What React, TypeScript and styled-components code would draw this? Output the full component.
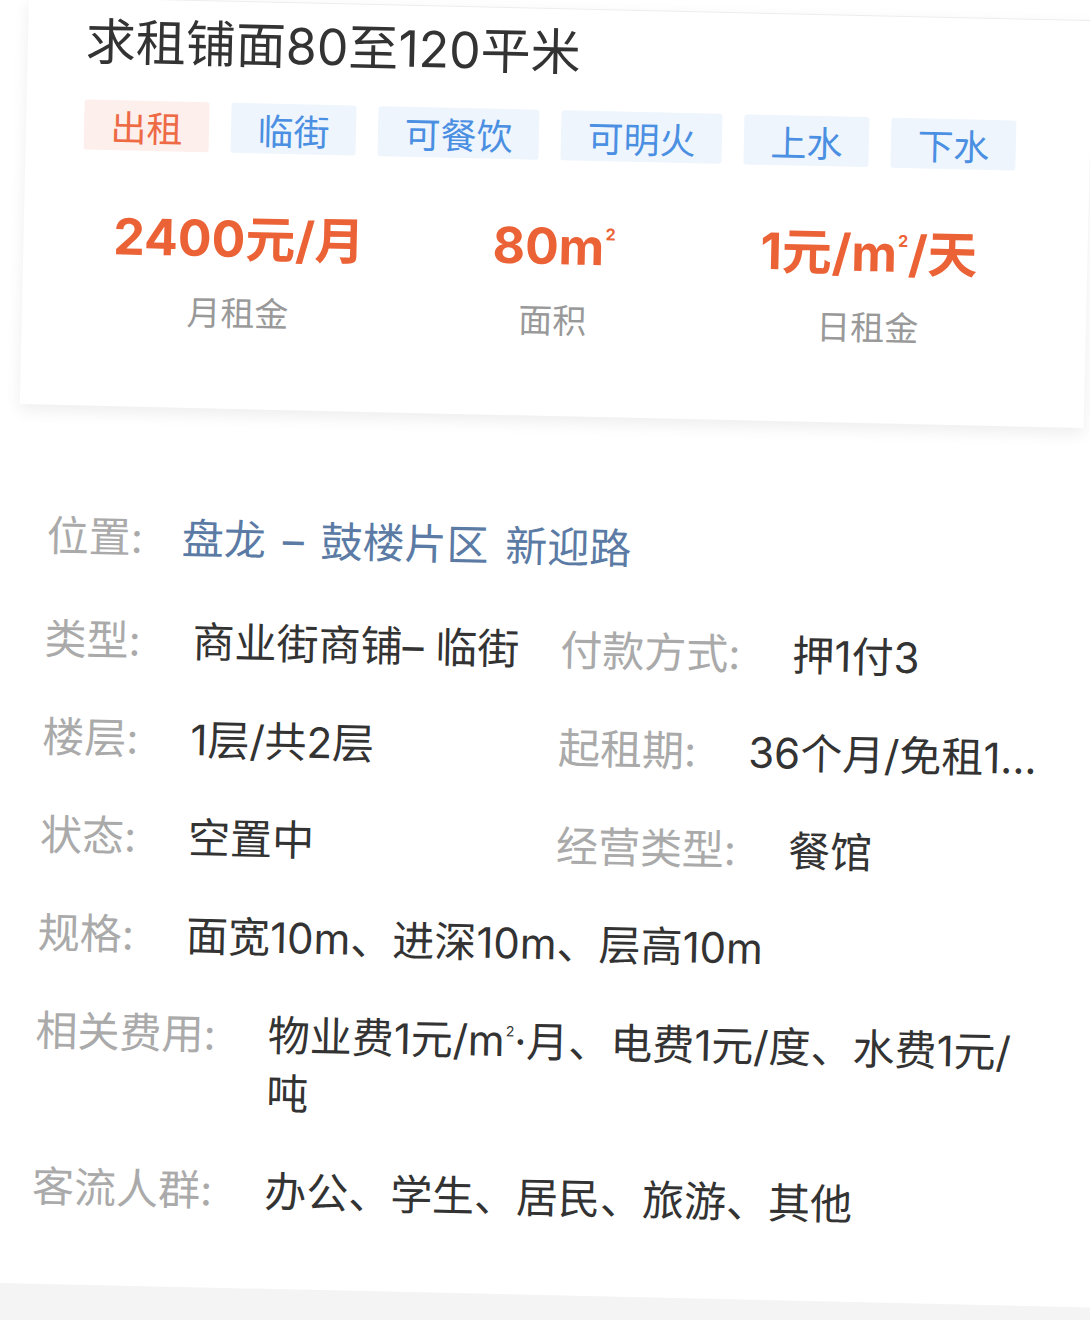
import React from 'react';
import styled, { createGlobalStyle } from 'styled-components';

// the whole sheet sits tilted by ~1.3deg in the capture

const GlobalStyle = createGlobalStyle`
  html, body {
    margin: 0;
    padding: 0;
    background: #fff;
    overflow: hidden;
  }
  body {
    font-family: Inter, "Noto Sans CJK SC", sans-serif;
  }
`;

const Page = styled.div`
  width: 1090px;
  background: #fff;
  transform-origin: 545px 660px;
  transform: rotate(1.29deg);
`;

const Card = styled.section`
  margin: 8px 12px 0 14px;
  padding: 13px 0 73px 58px;
  background: #fff;
  border-top: 1px solid #ededed;
  box-shadow: 0 6px 16px rgba(0, 0, 0, 0.07);
`;

const Title = styled.h1`
  margin: 0;
  font-size: 50px;
  line-height: 60px;
  font-weight: 400;
  color: #333;
`;

const TagRow = styled.div`
  display: flex;
  gap: 22px;
  margin-top: 28px;
`;

const Tag = styled.span<{ $tone: 'red' | 'blue' }>`
  height: 50px;
  overflow: hidden;
  line-height: 56px;
  padding: 0 26.5px;
  font-size: 36px;
  border-radius: 3px;
  background: ${(p) => (p.$tone === 'red' ? '#fdefeb' : '#eef5fd')};
  color: ${(p) => (p.$tone === 'red' ? '#ee6a45' : '#4a8fe2')};
`;

const Stats = styled.div`
  display: grid;
  grid-template-columns: repeat(3, 315px);
  margin-top: 56px;
`;

const Stat = styled.div`
  text-align: center;
`;

const StatValue = styled.div`
  font-size: 50px;
  line-height: 60px;
  font-weight: 700;
  color: #eb6236;
  white-space: nowrap;
`;

const Sup = styled.sup<{ $raise: number; $size: number }>`
  font-size: ${(p) => p.$size}px;
  line-height: 0;
  vertical-align: ${(p) => p.$raise}px;
  margin-left: 1px;
`;

const StatLabel = styled.div`
  margin-top: 23px;
  font-size: 34px;
  line-height: 44px;
  color: #999;
`;

const Details = styled.section`
  padding: 82px 44px 48px 44px;
`;

const Row = styled.div<{ $first?: boolean }>`
  display: grid;
  grid-template-columns: 516px 1fr;
  padding: ${(p) => (p.$first ? '20px 0 25px' : '20px 0')};
  font-size: 42px;
  line-height: 58px;
`;

const Item = styled.div<{ $wide?: boolean }>`
  display: flex;
  min-width: 0;
  grid-column: ${(p) => (p.$wide ? '1 / span 2' : 'auto')};
`;

const Label = styled.span`
  flex: none;
  color: #aaa;
  white-space: nowrap;
`;

const Value = styled.span<{ $gap?: number; $link?: boolean }>`
  flex: 1;
  min-width: 0;
  margin-left: ${(p) => p.$gap ?? 52}px;
  color: ${(p) => (p.$link ? '#5b7ba5' : '#333')};
  white-space: ${(p) => (p.$link ? 'nowrap' : 'normal')};
  word-spacing: ${(p) => (p.$link ? '5px' : 'normal')};
`;

const Footer = styled.div`
  height: 90px;
  margin: 0 -40px;
  background: #f4f4f4;
`;

const tags: { text: string; tone: 'red' | 'blue' }[] = [
  { text: '出租', tone: 'red' },
  { text: '临街', tone: 'blue' },
  { text: '可餐饮', tone: 'blue' },
  { text: '可明火', tone: 'blue' },
  { text: '上水', tone: 'blue' },
  { text: '下水', tone: 'blue' }
];

function App() {
  return (
    <>
      <GlobalStyle />
      <Page>
        <Card>
          <Title>求租铺面80至120平米</Title>
          <TagRow>
            {tags.map((t) => (
              <Tag key={t.text} $tone={t.tone}>
                {t.text}
              </Tag>
            ))}
          </TagRow>
          <Stats>
            <Stat>
              <StatValue>2400元/月</StatValue>
              <StatLabel>月租金</StatLabel>
            </Stat>
            <Stat>
              <StatValue>
                80m
                <Sup $size={16} $raise={25}>2</Sup>
              </StatValue>
              <StatLabel>面积</StatLabel>
            </Stat>
            <Stat>
              <StatValue>
                1元/m
                <Sup $size={16} $raise={25}>2</Sup>
                /天
              </StatValue>
              <StatLabel>日租金</StatLabel>
            </Stat>
          </Stats>
        </Card>

        <Details>
          <Row $first>
            <Item $wide>
              <Label>位置:</Label>
              <Value $gap={39} $link>
                盘龙 – 鼓楼片区 新迎路
              </Value>
            </Item>
          </Row>
          <Row>
            <Item>
              <Label>类型:</Label>
              <Value>商业街商铺– 临街</Value>
            </Item>
            <Item>
              <Label>付款方式:</Label>
              <Value>押1付3</Value>
            </Item>
          </Row>
          <Row>
            <Item>
              <Label>楼层:</Label>
              <Value>1层/共2层</Value>
            </Item>
            <Item>
              <Label>起租期:</Label>
              <Value>36个月/免租1...</Value>
            </Item>
          </Row>
          <Row>
            <Item>
              <Label>状态:</Label>
              <Value>空置中</Value>
            </Item>
            <Item>
              <Label>经营类型:</Label>
              <Value>餐馆</Value>
            </Item>
          </Row>
          <Row>
            <Item $wide>
              <Label>规格:</Label>
              <Value>面宽10m、进深10m、层高10m</Value>
            </Item>
          </Row>
          <Row>
            <Item $wide>
              <Label>相关费用:</Label>
              <Value>
                物业费1元/m
                <Sup $size={14} $raise={20}>2</Sup>
                ·月、电费1元/度、水费1元/吨
              </Value>
            </Item>
          </Row>
          <Row>
            <Item $wide>
              <Label>客流人群:</Label>
              <Value>办公、学生、居民、旅游、其他</Value>
            </Item>
          </Row>
        </Details>
        <Footer />
      </Page>
    </>
  );
}

export default App;
